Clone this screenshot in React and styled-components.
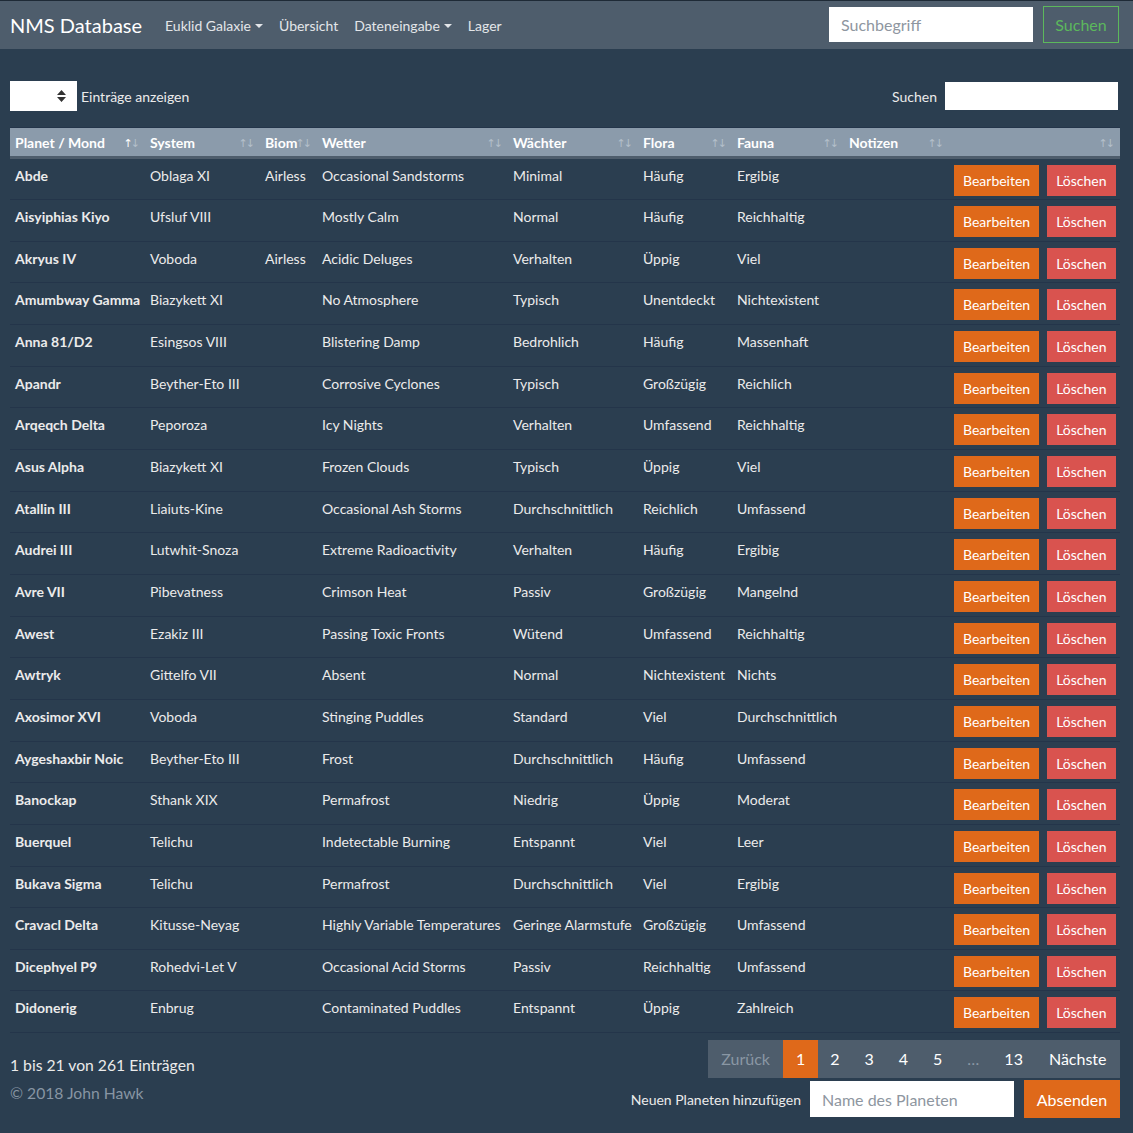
import React from 'react';
import styled, { createGlobalStyle } from 'styled-components';

const GlobalStyle = createGlobalStyle`
  html, body {
    margin: 0;
    padding: 0;
    background: #2b3e50;
    font-family: Lato, "Open Sans", "Liberation Sans", sans-serif;
    color: #ebebeb;
    font-size: 14px;
  }
  * { box-sizing: border-box; }
`;

const Nav = styled.nav`
  height: 49px;
  background: #4e5d6c;
  border-top: 1px solid #1e2a36;
  display: flex;
  align-items: center;
  padding: 0 14px 0 10px;
`;

const Brand = styled.a`
  font-size: 20px;
  color: #fff;
  text-decoration: none;
  margin-right: 15px;
`;

const NavItems = styled.ul`
  display: flex;
  align-items: center;
  list-style: none;
  margin: 0;
  padding: 0;
  flex: 1;
`;

const NavLink = styled.li`
  color: #e3e6e9;
  font-size: 14px;
  padding: 0 8px;
  display: flex;
  align-items: center;
`;

const Caret = styled.span`
  display: inline-block;
  margin-left: 4px;
  margin-top: 1px;
  border-left: 4px solid transparent;
  border-right: 4px solid transparent;
  border-top: 4px solid #e3e6e9;
`;

const NavForm = styled.form`
  display: flex;
  align-items: center;
  gap: 10px;
  margin-top: -1px;
`;

const NavInput = styled.input`
  width: 204px;
  height: 35px;
  border: 0;
  padding: 0 12px;
  font-family: inherit;
  font-size: 16px;
  color: #2b3e50;
  &::placeholder { color: #8e96a0; }
`;

const OutlineButton = styled.button`
  height: 37px;
  width: 76px;
  background: transparent;
  border: 1px solid #5cb85c;
  color: #5cb85c;
  font-family: inherit;
  font-size: 16px;
`;

const Page = styled.main`
  padding: 32px 13px 0 10px;
`;

const Controls = styled.div`
  display: flex;
  justify-content: space-between;
  align-items: center;
  margin-bottom: 16px;
`;

const Length = styled.label`
  display: flex;
  align-items: center;
  gap: 4px;
  font-size: 14px;
`;

const SelectBox = styled.div`
  width: 67px;
  height: 30px;
  background: #fff;
  position: relative;
`;

const SelectArrows = styled.svg`
  position: absolute;
  right: 11px;
  top: 9px;
`;

const Filter = styled.label`
  display: flex;
  align-items: center;
  gap: 8px;
  font-size: 14px;
  margin-right: 2px;
`;

const FilterInput = styled.input`
  width: 173px;
  height: 28px;
  border: 0;
  padding: 0 8px;
`;

const Table = styled.table`
  width: 1110px;
  border-collapse: collapse;
  table-layout: fixed;
  border-top: 1px solid #24354a;
`;

const Th = styled.th`
  position: relative;
  background: #8b9bab;
  color: #fff;
  font-weight: 700;
  font-size: 14px;
  line-height: 20px;
  text-align: left;
  padding: 5px 5px 3px;
  border-bottom: 3px solid #4e5d6c;
  white-space: nowrap;
`;

const Sort = styled.span`
  position: absolute;
  right: 7px;
  top: 10px;
  font-size: 11px;
  line-height: 12px;
  font-weight: 400;
  font-family: "DejaVu Sans", sans-serif;
  letter-spacing: -2px;
`;

const Arrow = styled.span`
  color: ${({ $on }) => ($on ? '#ffffff' : '#b3bfca')};
`;

const Tr = styled.tr`
  height: 41.67px;
  border-bottom: 1px solid #24354a;
`;

const Td = styled.td`
  vertical-align: top;
  padding: 7px 5px 0;
  font-size: 14px;
  line-height: 20px;
  color: #ebebeb;
  font-weight: ${({ $bold }) => ($bold ? 700 : 400)};
  white-space: nowrap;
  overflow: hidden;
`;

const ActionCell = styled.td`
  vertical-align: top;
  padding: 6px 5px 3px;
  white-space: nowrap;
`;

const Btn = styled.button`
  height: 31px;
  padding: 0 9px;
  border: 0;
  border-radius: 0;
  color: #fff;
  font-family: inherit;
  font-size: 14px;
  background: ${({ $kind }) => ($kind === 'danger' ? '#d9534f' : '#df691a')};
  margin-right: ${({ $gap }) => ($gap ? '8px' : '0')};
`;

const Bottom = styled.div`
  display: flex;
  justify-content: space-between;
  margin-top: 7px;
`;

const Info = styled.div`
  padding-top: 13px;
  font-size: 15.7px;
  line-height: 24px;
`;

const Copy = styled.div`
  font-size: 15.7px;
  line-height: 24px;
  color: #8795a3;
  margin-top: 4px;
`;

const Right = styled.div`
  display: flex;
  flex-direction: column;
  align-items: flex-end;
  gap: 2px;
`;

const Pagination = styled.ul`
  display: flex;
  list-style: none;
  margin: 0;
  padding: 0;
  background: #4e5d6c;
`;

const PageItem = styled.li`
  height: 38px;
  line-height: 38px;
  padding: 0 ${({ $wide }) => ($wide ? '13.5px' : '12.5px')};
  font-size: 16px;
  color: ${({ $dim }) => ($dim ? '#8a97a4' : '#fff')};
  background: ${({ $active }) => ($active ? '#df691a' : 'transparent')};
`;

const AddForm = styled.form`
  display: flex;
  align-items: center;
`;

const AddLabel = styled.label`
  font-size: 14px;
  margin-right: 9px;
`;

const AddInput = styled.input`
  width: 204px;
  height: 36px;
  border: 0;
  padding: 0 12px;
  font-family: inherit;
  font-size: 16px;
  &::placeholder { color: #8e96a0; }
`;

const SubmitButton = styled.button`
  margin-left: 10px;
  height: 38px;
  width: 96px;
  border: 0;
  background: #df691a;
  color: #fff;
  font-family: inherit;
  font-size: 16px;
`;

const columns = [
  ['Planet / Mond', 135, true],
  ['System', 115],
  ['Biom', 57],
  ['Wetter', 191],
  ['Wächter', 130],
  ['Flora', 94],
  ['Fauna', 112],
  ['Notizen', 105],
  ['', 171],
];

const rows = [
  ['Abde', 'Oblaga XI', 'Airless', 'Occasional Sandstorms', 'Minimal', 'Häufig', 'Ergibig'],
  ['Aisyiphias Kiyo', 'Ufsluf VIII', '', 'Mostly Calm', 'Normal', 'Häufig', 'Reichhaltig'],
  ['Akryus IV', 'Voboda', 'Airless', 'Acidic Deluges', 'Verhalten', 'Üppig', 'Viel'],
  ['Amumbway Gamma', 'Biazykett XI', '', 'No Atmosphere', 'Typisch', 'Unentdeckt', 'Nichtexistent'],
  ['Anna 81/D2', 'Esingsos VIII', '', 'Blistering Damp', 'Bedrohlich', 'Häufig', 'Massenhaft'],
  ['Apandr', 'Beyther-Eto III', '', 'Corrosive Cyclones', 'Typisch', 'Großzügig', 'Reichlich'],
  ['Arqeqch Delta', 'Peporoza', '', 'Icy Nights', 'Verhalten', 'Umfassend', 'Reichhaltig'],
  ['Asus Alpha', 'Biazykett XI', '', 'Frozen Clouds', 'Typisch', 'Üppig', 'Viel'],
  ['Atallin III', 'Liaiuts-Kine', '', 'Occasional Ash Storms', 'Durchschnittlich', 'Reichlich', 'Umfassend'],
  ['Audrei III', 'Lutwhit-Snoza', '', 'Extreme Radioactivity', 'Verhalten', 'Häufig', 'Ergibig'],
  ['Avre VII', 'Pibevatness', '', 'Crimson Heat', 'Passiv', 'Großzügig', 'Mangelnd'],
  ['Awest', 'Ezakiz III', '', 'Passing Toxic Fronts', 'Wütend', 'Umfassend', 'Reichhaltig'],
  ['Awtryk', 'Gittelfo VII', '', 'Absent', 'Normal', 'Nichtexistent', 'Nichts'],
  ['Axosimor XVI', 'Voboda', '', 'Stinging Puddles', 'Standard', 'Viel', 'Durchschnittlich'],
  ['Aygeshaxbir Noic', 'Beyther-Eto III', '', 'Frost', 'Durchschnittlich', 'Häufig', 'Umfassend'],
  ['Banockap', 'Sthank XIX', '', 'Permafrost', 'Niedrig', 'Üppig', 'Moderat'],
  ['Buerquel', 'Telichu', '', 'Indetectable Burning', 'Entspannt', 'Viel', 'Leer'],
  ['Bukava Sigma', 'Telichu', '', 'Permafrost', 'Durchschnittlich', 'Viel', 'Ergibig'],
  ['Cravacl Delta', 'Kitusse-Neyag', '', 'Highly Variable Temperatures', 'Geringe Alarmstufe', 'Großzügig', 'Umfassend'],
  ['Dicephyel P9', 'Rohedvi-Let V', '', 'Occasional Acid Storms', 'Passiv', 'Reichhaltig', 'Umfassend'],
  ['Didonerig', 'Enbrug', '', 'Contaminated Puddles', 'Entspannt', 'Üppig', 'Zahlreich'],
];

const pages = [
  { label: 'Zurück', dim: true, wide: true },
  { label: '1', active: true },
  { label: '2' },
  { label: '3' },
  { label: '4' },
  { label: '5' },
  { label: '…', dim: true },
  { label: '13' },
  { label: 'Nächste', wide: true },
];

export default function App() {
  return (
    <>
      <GlobalStyle />
      <Nav>
        <Brand href="#">NMS Database</Brand>
        <NavItems>
          <NavLink>Euklid Galaxie<Caret /></NavLink>
          <NavLink>Übersicht</NavLink>
          <NavLink>Dateneingabe<Caret /></NavLink>
          <NavLink>Lager</NavLink>
        </NavItems>
        <NavForm onSubmit={(e) => e.preventDefault()}>
          <NavInput placeholder="Suchbegriff" />
          <OutlineButton>Suchen</OutlineButton>
        </NavForm>
      </Nav>

      <Page>
        <Controls>
          <Length>
            <SelectBox>
              <SelectArrows width="9" height="12" viewBox="0 0 9 12">
                <path d="M4.5 0 L9 5 H0 Z M0 7 H9 L4.5 12 Z" fill="#333" />
              </SelectArrows>
            </SelectBox>
            Einträge anzeigen
          </Length>
          <Filter>
            Suchen
            <FilterInput />
          </Filter>
        </Controls>

        <Table>
          <colgroup>
            {columns.map(([name, w], i) => (
              <col key={i} style={{ width: w }} />
            ))}
          </colgroup>
          <thead>
            <tr>
              {columns.map(([name, w, active], i) => (
                <Th key={i}>
                  {name}
                  <Sort>
                    <Arrow $on={active}>↑</Arrow>
                    <Arrow>↓</Arrow>
                  </Sort>
                </Th>
              ))}
            </tr>
          </thead>
          <tbody>
            {rows.map((r, i) => (
              <Tr key={i}>
                {r.map((c, j) => (
                  <Td key={j} $bold={j === 0}>{c}</Td>
                ))}
                <Td />
                <ActionCell>
                  <Btn $gap>Bearbeiten</Btn>
                  <Btn $kind="danger">Löschen</Btn>
                </ActionCell>
              </Tr>
            ))}
          </tbody>
        </Table>

        <Bottom>
          <div>
            <Info>1 bis 21 von 261 Einträgen</Info>
            <Copy>© 2018 John Hawk</Copy>
          </div>
          <Right>
            <Pagination>
              {pages.map((p, i) => (
                <PageItem key={i} $dim={p.dim} $active={p.active} $wide={p.wide}>
                  {p.label}
                </PageItem>
              ))}
            </Pagination>
            <AddForm onSubmit={(e) => e.preventDefault()}>
              <AddLabel>Neuen Planeten hinzufügen</AddLabel>
              <AddInput placeholder="Name des Planeten" />
              <SubmitButton>Absenden</SubmitButton>
            </AddForm>
          </Right>
        </Bottom>
      </Page>
    </>
  );
}
